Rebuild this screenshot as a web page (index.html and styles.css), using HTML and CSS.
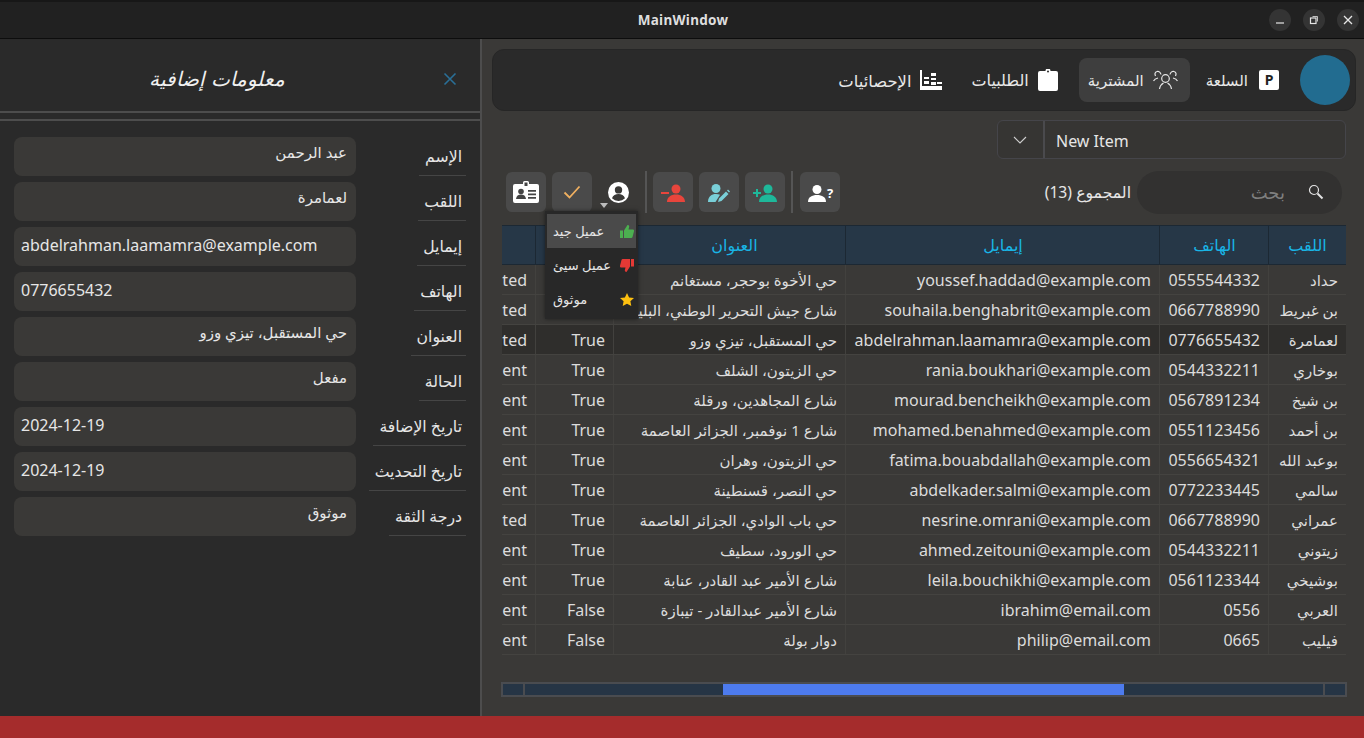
FILE: index.html
```html
<!DOCTYPE html>
<html>
<head>
    <meta charset="utf-8">
    <title>MainWindow</title>
    <link rel="stylesheet" href="styles.css">
</head>
<body>
    <div class="titlebar">
        <span class="window-title">MainWindow</span>
        <div class="window-buttons">
            <button class="window-btn"><svg width="10" height="10" viewBox="0 0 10 10"><path d="M1 8h8" stroke="#e6e6e6" stroke-width="1.2"/></svg></button>
            <button class="window-btn"><svg width="10" height="10" viewBox="0 0 10 10" fill="none" stroke="#e6e6e6"><rect x="1.5" y="3" width="5.5" height="5.5" stroke-width="1.2"/><path d="M3.5 1.5h5v5" stroke-width=".8"/></svg></button>
            <button class="window-btn"><svg width="10" height="10" viewBox="0 0 10 10"><path d="M1 1l8 8M9 1l-8 8" stroke="#e6e6e6" stroke-width="1.3"/></svg></button>
        </div>
    </div>

    <div class="app">
        <aside class="side-panel">
            <div class="side-header">
                <span class="side-title">معلومات إضافية</span>
                <svg class="side-close" width="14" height="14" viewBox="0 0 14 14"><path d="M1.5 1.5l11 11M12.5 1.5l-11 11" stroke="#2a6f97" stroke-width="1.6"/></svg>
            </div>
            <div class="side-rule"></div>
            <div class="info-form">
                <div class="info-row"><div class="info-value top" dir="rtl">عبد الرحمن</div><div class="info-label"><span>الإسم</span></div></div>
                <div class="info-row"><div class="info-value top" dir="rtl">لعمامرة</div><div class="info-label"><span>اللقب</span></div></div>
                <div class="info-row"><div class="info-value">abdelrahman.laamamra@example.com</div><div class="info-label"><span>إيمايل</span></div></div>
                <div class="info-row"><div class="info-value">0776655432</div><div class="info-label"><span>الهاتف</span></div></div>
                <div class="info-row"><div class="info-value top" dir="rtl">حي المستقبل، تيزي وزو</div><div class="info-label"><span>العنوان</span></div></div>
                <div class="info-row"><div class="info-value top" dir="rtl">مفعل</div><div class="info-label"><span>الحالة</span></div></div>
                <div class="info-row"><div class="info-value">2024-12-19</div><div class="info-label"><span>تاريخ الإضافة</span></div></div>
                <div class="info-row"><div class="info-value">2024-12-19</div><div class="info-label"><span>تاريخ التحديث</span></div></div>
                <div class="info-row"><div class="info-value top" dir="rtl">موثوق</div><div class="info-label"><span>درجة الثقة</span></div></div>
            </div>
        </aside>

        <main class="content">
            <nav class="topnav">
                <a class="nav-item stats">
                    <span>الإحصائيات</span>
                    <svg width="22" height="20" viewBox="0 0 22 20" fill="#fff"><path d="M0 0h2v20H0zM0 16h22v4H0zM4 7h5v2H4zM4 11h5v3H4zM11 3h5v3h-5zM11 8h5v2h-5zM11 12h5v3h-5zM17 12h5v2h-5z"/></svg>
                </a>
                <a class="nav-item orders">
                    <span>الطلبيات</span>
                    <svg width="20" height="22" viewBox="0 0 20 22" fill="#fff"><path d="M2 2h5.5a2.5 2.5 0 0 1 5 0H18a2 2 0 0 1 2 2v16a2 2 0 0 1-2 2H2a2 2 0 0 1-2-2V4a2 2 0 0 1 2-2z"/><circle cx="10" cy="2.5" r="1" fill="#2a2a2a"/></svg>
                </a>
                <a class="nav-item active">
                    <span>المشترية</span>
                    <svg width="25" height="20" viewBox="0 0 25 20" fill="none" stroke="#e8e8e8" stroke-width="1.2"><circle cx="12.5" cy="8.5" r="3.8"/><path d="M6.5 19c.6-3.4 2.6-5.3 4-6M18.500 19c-.6-3.4-2.600-5.300-4-6M8 4.500C7.500 2 5.500 1 4 1.500 2 2 1.500 4 2.500 6M5 8c-2 .5-4 2-4.500 3M17 4.500c.5-2.500 2.500-3.500 4-3 2 .5 2.500 2.500 1.500 4.500M20 8c2 .5 4 2 4.500 3"/></svg>
                </a>
                <a class="nav-item product">
                    <span>السلعة</span>
                    <span class="p-icon">P</span>
                </a>
                <div class="avatar"></div>
            </nav>

            <div class="combo">
                <button class="combo-arrow"><svg width="14" height="8" viewBox="0 0 14 8" fill="none"><path d="M1 1l6 6 6-6" stroke="#cfcfcf" stroke-width="1.1"/></svg></button>
                <div class="combo-text">New Item</div>
            </div>

            <div class="toolbar">
                <button class="tool-btn"><svg width="26" height="22" viewBox="0 0 26 22"><path fill="#fff" d="M2 3h8V1.500A1.500 1.500 0 0 1 11.500 0h3A1.500 1.500 0 0 1 16 1.500V3h8a2 2 0 0 1 2 2v15a2 2 0 0 1-2 2H2a2 2 0 0 1-2-2V5a2 2 0 0 1 2-2z"/><path fill="#444" d="M11.500 1.500h3V5h-3zM15 9h8v1.800h-8zM15 12.500h8v1.800h-8zM15 16h8v1.800h-8z"/><circle cx="8" cy="10.500" r="2.800" fill="#444"/><path fill="#444" d="M3 18c.3-3.200 2.400-4.500 5-4.500s4.700 1.300 5 4.500z"/></svg></button>
                <button class="tool-btn"><svg width="18" height="14" viewBox="0 0 18 14" fill="none"><path d="M1.500 7.500l5 5 10-11" stroke="#f0b060" stroke-width="1.800"/></svg></button>
                <button class="tool-btn plain">
                    <svg width="21" height="21" viewBox="0 0 20 20"><circle cx="10" cy="10" r="10" fill="#fff"/><circle cx="10" cy="7.500" r="3.500" fill="#3a3937"/><path fill="#3a3937" d="M3.800 15.500c1-2.800 3.400-4 6.200-4s5.200 1.200 6.200 4A8.500 8.500 0 0 1 10 18a8.500 8.500 0 0 1-6.200-2.500z"/></svg>
                    <span class="drop-mark"></span>
                </button>
                <span class="tool-sep"></span>
                <button class="tool-btn person"><svg width="24" height="18" viewBox="0 0 24 18" fill="#e8453c"><circle cx="15" cy="5" r="4.500"/><path d="M6 18c0-5 4-7.500 9-7.500s9 2.500 9 7.500zM0 8h8v2H0z"/></svg></button>
                <button class="tool-btn person"><svg width="22" height="20" viewBox="0 0 22 20"><circle cx="8" cy="5.500" r="4.500" fill="#79cfd8"/><path fill="#79cfd8" d="M0 19c0-5.500 3.500-8 8-8 1.500 0 2.800.3 4 .8L7.500 19z"/><path fill="#79cfd8" d="M10 19l1-3.500 7-7 2.500 2.500-7 7zM19 7.500l1-1 2 2-1 1z"/></svg></button>
                <button class="tool-btn person"><svg width="24" height="18" viewBox="0 0 24 18" fill="#1eb89a"><circle cx="15" cy="5" r="4.500"/><path d="M6 18c0-5 4-7.500 9-7.500s9 2.500 9 7.500zM0 8h3V5h2v3h3v2H5v3H3v-3H0z"/></svg></button>
                <span class="tool-sep"></span>
                <button class="tool-btn help"><svg width="18" height="17" viewBox="0 0 18 17" fill="#fff"><circle cx="9" cy="4.500" r="4.500"/><path d="M0 17c0-5 4-7 9-7s9 2 9 7z"/></svg><span class="help-mark">?</span></button>

                <div class="toolbar-right">
                    <span class="total" dir="rtl">المجموع (13)</span>
                    <div class="search">
                        <span class="search-hint">بحث</span>
                        <svg width="16" height="16" viewBox="0 0 16 16" fill="none" stroke="#e4e4e4"><circle cx="6" cy="6" r="4.500" stroke-width="1.200"/><path d="M9.500 9.500l5 5" stroke-width="2"/></svg>
                    </div>
                </div>
            </div>

            <div class="table-wrap">
                <table class="data-table">
                    <colgroup>
                        <col class="col-state"><col class="col-bool"><col class="col-addr"><col class="col-mail"><col class="col-phone"><col class="col-name">
                    </colgroup>
                    <thead>
                        <tr><th></th><th></th><th class="th-addr">العنوان</th><th>إيمايل</th><th>الهاتف</th><th>اللقب</th></tr>
                    </thead>
                    <tbody>
                        <tr><td>ted</td><td></td><td>حي الأخوة بوحجر، مستغانم</td><td>youssef.haddad@example.com</td><td>0555544332</td><td>حداد</td></tr>
                        <tr><td>ted</td><td></td><td>شارع جيش التحرير الوطني، البليدة</td><td>souhaila.benghabrit@example.com</td><td>0667788990</td><td>بن غبريط</td></tr>
                        <tr class="selected"><td>ted</td><td>True</td><td>حي المستقبل، تيزي وزو</td><td>abdelrahman.laamamra@example.com</td><td>0776655432</td><td>لعمامرة</td></tr>
                        <tr><td>ent</td><td>True</td><td>حي الزيتون، الشلف</td><td>rania.boukhari@example.com</td><td>0544332211</td><td>بوخاري</td></tr>
                        <tr><td>ent</td><td>True</td><td>شارع المجاهدين، ورقلة</td><td>mourad.bencheikh@example.com</td><td>0567891234</td><td>بن شيخ</td></tr>
                        <tr><td>ent</td><td>True</td><td>شارع 1 نوفمبر، الجزائر العاصمة</td><td>mohamed.benahmed@example.com</td><td>0551123456</td><td>بن أحمد</td></tr>
                        <tr><td>ent</td><td>True</td><td>حي الزيتون، وهران</td><td>fatima.bouabdallah@example.com</td><td>0556654321</td><td>بوعبد الله</td></tr>
                        <tr><td>ent</td><td>True</td><td>حي النصر، قسنطينة</td><td>abdelkader.salmi@example.com</td><td>0772233445</td><td>سالمي</td></tr>
                        <tr><td>ted</td><td>True</td><td>حي باب الوادي، الجزائر العاصمة</td><td>nesrine.omrani@example.com</td><td>0667788990</td><td>عمراني</td></tr>
                        <tr><td>ent</td><td>True</td><td>حي الورود، سطيف</td><td>ahmed.zeitouni@example.com</td><td>0544332211</td><td>زيتوني</td></tr>
                        <tr><td>ent</td><td>True</td><td>شارع الأمير عبد القادر، عنابة</td><td>leila.bouchikhi@example.com</td><td>0561123344</td><td>بوشيخي</td></tr>
                        <tr><td>ent</td><td>False</td><td>شارع الأمير عبدالقادر - تيبازة</td><td>ibrahim@email.com</td><td>0556</td><td>العربي</td></tr>
                        <tr><td>ent</td><td>False</td><td>دوار بولة</td><td>philip@email.com</td><td>0665</td><td>فيليب</td></tr>
                    </tbody>
                </table>
            </div>

            <div class="hscroll">
                <span class="hscroll-end"></span>
                <div class="hscroll-track"><div class="hscroll-thumb"></div></div>
                <span class="hscroll-end"></span>
            </div>

            <div class="trust-menu">
                <div class="menu-item hover">
                    <span>عميل جيد</span>
                    <svg width="14" height="13" viewBox="0 0 14 13" fill="#4caf50"><path d="M0 5.500h3V13H0zM4 5.500L7.500 0c1.500 0 2 1 1.500 2.500L8.500 4.500H13c1 0 1.200 1 1 1.800l-1.500 5.700c-.2.600-.6 1-1.300 1H4z"/></svg>
                </div>
                <div class="menu-item">
                    <span>عميل سيئ</span>
                    <svg width="14" height="13" viewBox="0 0 14 13" fill="#e53935"><path d="M14 7.500h-3V0h3zM10 7.500L6.500 13c-1.500 0-2-1-1.500-2.500l.5-2H1c-1 0-1.200-1-1-1.800L1.500 1C1.700.4 2.100 0 2.800 0H10z"/></svg>
                </div>
                <div class="menu-item">
                    <span>موثوق</span>
                    <svg width="14" height="13" viewBox="0 0 14 13" fill="#fdc010"><path d="M7 0l2.100 4.400 4.900.6-3.600 3.300.9 4.700L7 10.700 2.700 13l.9-4.700L0 5l4.900-.6z"/></svg>
                </div>
            </div>
        </main>
    </div>

    <div class="statusbar"></div>
</body>
</html>
```

FILE: styles.css
```css
* {
    box-sizing: border-box;
}
html, body {
    height: 100%;
}
body {
    margin: 0;
    display: flex;
    flex-direction: column;
    overflow: hidden;
    background-color: #3a3937;
    color: #e6e6e6;
    font-family: "Noto Sans", "DejaVu Sans", sans-serif;
    font-size: 16px;
}
button {
    font: inherit;
    color: inherit;
    border: none;
    padding: 0;
    cursor: pointer;
}

/* window title */
.titlebar {
    height: 39px;
    flex: none;
    position: relative;
    display: flex;
    align-items: center;
    justify-content: flex-end;
    padding-right: 5px;
    background-color: #212121;
    border-top: 2px solid #171717;
    border-bottom: 1px solid #0d0d0d;
}
.window-title {
    position: absolute;
    left: 2px;
    right: 0;
    text-align: center;
    font-size: 13.5px;
    font-weight: 700;
    letter-spacing: .3px;
    color: #dedede;
}
.window-buttons {
    display: flex;
    gap: 12px;
}
.window-btn {
    width: 22px;
    height: 22px;
    border-radius: 50%;
    background-color: #343434;
    display: flex;
    align-items: center;
    justify-content: center;
}

.app {
    flex: 1;
    display: flex;
    min-height: 0;
}
.statusbar {
    height: 22px;
    flex: none;
    background-color: #a52c2c;
}

/* left panel */
.side-panel {
    width: 482px;
    flex: none;
    background-color: #2a2a2a;
    border-right: 2px solid #4d4d4d;
}
.side-header {
    height: 74px;
    position: relative;
    display: flex;
    align-items: center;
    justify-content: center;
    padding-right: 46px;
    padding-top: 7px;
    border-bottom: 2px solid #4d4d4d;
}
.side-title {
    font-size: 20px;
    font-style: italic;
    color: #f0f0f0;
}
.side-close {
    position: absolute;
    left: 443px;
    top: 33px;
}
.side-rule {
    height: 8px;
    border-bottom: 2px solid #4d4d4d;
}
.info-form {
    padding: 16px 14px 0;
    display: flex;
    flex-direction: column;
    gap: 6px;
}
.info-row {
    display: flex;
    height: 39px;
}
.info-value {
    width: 342px;
    flex: none;
    height: 39px;
    padding: 0 7px;
    line-height: 36px;
    background-color: #3a3937;
    border-radius: 8px;
    font-size: 16px;
    color: #e6e6e6;
}
.info-value.top {
    line-height: 31px;
    padding: 0 9px;
    font-size: 15px;
}
.info-label {
    flex: 1;
    display: flex;
    justify-content: flex-end;
}
.info-label span {
    height: 39px;
    padding: 8px 4px 0 6px;
    font-size: 15.7px;
    border-bottom: 1px solid #454545;
    white-space: nowrap;
    direction: rtl;
}

/* right side */
.content {
    flex: 1;
    position: relative;
    padding: 10px 8px 0 10px;
    min-width: 0;
}
.topnav {
    height: 62px;
    display: flex;
    align-items: center;
    justify-content: flex-end;
    padding-right: 5px;
    background-color: #2a2a2a;
    border: 1px solid #262626;
    border-radius: 12px;
}
.nav-item {
    height: 44px;
    display: flex;
    align-items: center;
    gap: 10px;
    font-size: 15px;
    color: #e8e8e8;
    padding: 0 10px;
    border-radius: 8px;
}
.nav-item.stats {
    margin-right: 9px;
    font-size: 16.4px;
    gap: 9px;
}
.nav-item.orders {
    margin-right: 11px;
    font-size: 16px;
    gap: 9px;
}
.nav-item.active {
    background-color: #3e3e3e;
    margin-right: 6px;
    padding: 0 12px 0 9px;
    gap: 9px;
}
.nav-item.product {
    margin-right: 11px;
    gap: 11px;
}
.p-icon {
    width: 20px;
    height: 20px;
    background-color: #fff;
    border-radius: 2px;
    color: #222;
    font-size: 14px;
    font-weight: 700;
    text-align: center;
    line-height: 20px;
}
.avatar {
    width: 50px;
    height: 50px;
    border-radius: 50%;
    background-color: #226c90;
}

.combo {
    width: 349px;
    height: 39px;
    margin: 9px 10px 0 auto;
    display: flex;
    background-color: #363533;
    border: 1px solid #45454a;
    border-radius: 6px;
}
.combo-arrow {
    width: 47px;
    flex: none;
    background: none;
    display: flex;
    align-items: center;
    justify-content: center;
    border-right: 2px solid #4a4a4d;
    padding-right: 2px;
}
.combo-text {
    padding-left: 11px;
    line-height: 40px;
    font-size: 16px;
}

.toolbar {
    height: 44px;
    margin-top: 11px;
    padding-left: 14px;
    display: flex;
    align-items: center;
    gap: 6px;
}
.tool-btn {
    width: 40px;
    height: 40px;
    flex: none;
    position: relative;
    background-color: #4a4a4a;
    border-radius: 6px;
    display: flex;
    align-items: center;
    justify-content: center;
}
.tool-btn.person {
    padding-top: 2px;
}
.tool-btn.plain {
    background: none;
    width: 41px;
}
.tool-btn.help {
    justify-content: flex-start;
    padding: 2px 0 0 8px;
    margin-left: 1px;
}
.help-mark {
    font-size: 13px;
    font-weight: 700;
    color: #fff;
    margin-left: 1px;
}
.drop-mark {
    position: absolute;
    left: 2px;
    bottom: 4px;
    border-left: 4px solid transparent;
    border-right: 4px solid transparent;
    border-top: 5px solid #bdbdbd;
}
.tool-sep {
    width: 2px;
    height: 42px;
    background-color: #555;
}
.toolbar-right {
    margin-left: auto;
    display: flex;
    align-items: center;
    gap: 6px;
    padding-right: 14px;
}
.total {
    font-size: 15.7px;
}
.search {
    width: 205px;
    height: 43px;
    display: flex;
    align-items: center;
    justify-content: flex-end;
    gap: 23px;
    padding-right: 18px;
    background-color: #323130;
    border-radius: 22px;
}
.search-hint {
    color: #7f7f7f;
    font-size: 18px;
}

/* table */
.table-wrap {
    width: 844px;
    margin-top: 11px;
    margin-left: 10px;
    overflow: hidden;
}
.data-table {
    width: 844px;
    table-layout: fixed;
    border-collapse: collapse;
}
.col-state { width: 34px; }
.col-bool { width: 78px; }
.col-addr { width: 232px; }
.col-mail { width: 314px; }
.col-phone { width: 109px; }
.col-name { width: 77px; }
.data-table th {
    height: 39px;
    background-color: #263747;
    border-top: 1px solid #1c2833;
    border-bottom: 1px solid #1c2833;
    box-shadow: inset -1px 0 0 #1c2833;
    color: #19b5e6;
    font-weight: 400;
    font-size: 16px;
}
.data-table th:last-child {
    box-shadow: none;
}
.data-table th.th-addr {
    padding-left: 10px;
}
.data-table td {
    height: 30px;
    padding: 0 9px 0 8px;
    text-align: right;
    white-space: nowrap;
    overflow: hidden;
    font-size: 16px;
    color: #dcdcdc;
    border-top: 1px solid #444340;
    border-bottom: 1px solid #444340;
    box-shadow: inset -1px 0 0 #42413e;
}
.data-table td:first-child {
    padding-left: 0;
}
.data-table td:last-child {
    padding-right: 8px;
    box-shadow: none;
}
.data-table td:nth-child(3),
.data-table td:nth-child(6) {
    font-size: 15px;
}
.data-table tr.selected td {
    background-color: #2f2e2c;
}

.hscroll {
    width: 846px;
    height: 15px;
    margin-top: 27px;
    margin-left: 9px;
    display: flex;
    gap: 2px;
    border: 2px solid #4a4c50;
    background-color: #4a4c50;
}
.hscroll-end {
    width: 20px;
    flex: none;
    background-color: #263545;
}
.hscroll-track {
    flex: 1;
    background-color: #263545;
    padding-left: 198px;
}
.hscroll-thumb {
    width: 401px;
    height: 100%;
    background-color: #4d7bee;
}

/* dropdown over the table */
.trust-menu {
    position: absolute;
    left: 63px;
    top: 172px;
    width: 93px;
    height: 108px;
    padding: 3px 2px;
    background-color: #282828;
    box-shadow: 0 0 4px rgba(0, 0, 0, .5);
}
.menu-item {
    height: 34px;
    display: flex;
    align-items: center;
    justify-content: space-between;
    padding: 0 2px 0 6px;
    font-size: 13px;
    color: #e6e6e6;
}
.menu-item.hover {
    background-color: #4a4a4a;
}
```
